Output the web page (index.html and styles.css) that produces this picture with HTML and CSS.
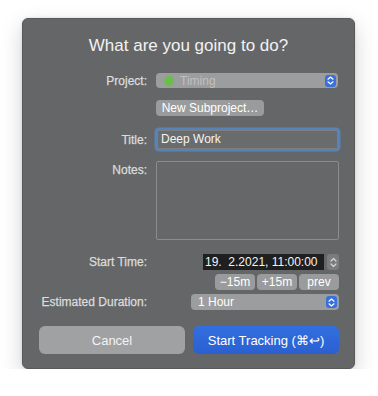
FILE: index.html
```html
<!DOCTYPE html>
<html lang="en">
<head>
    <meta charset="UTF-8">
    <meta name="viewport" content="width=device-width, initial-scale=1.0">
    <title>Start Tracking</title>
    <link rel="stylesheet" href="styles.css">
</head>
<body>

    <div class="dialog">
        <h1 class="heading">What are you going to do?</h1>

        <!-- Project -->
        <div class="row row-project">
            <div class="label">Project:</div>
            <div class="popup popup-project">
                <span class="dot"></span>
                <span class="popup-text muted">Timing</span>
                <span class="stepper-blue">
                    <svg width="7" height="9" viewBox="0 0 7 9"><path d="M1 3.2 L3.5 1 L6 3.2 M1 5.8 L3.5 8 L6 5.8" fill="none" stroke="#fff" stroke-width="1.2" stroke-linecap="round" stroke-linejoin="round"/></svg>
                </span>
            </div>
        </div>

        <div class="row row-sub">
            <div></div>
            <div class="control">
                <button class="btn-small btn-sub">New Subproject…</button>
            </div>
        </div>

        <!-- Title -->
        <div class="row row-title">
            <div class="label">Title:</div>
            <div class="text-field">Deep Work</div>
        </div>

        <!-- Notes -->
        <div class="row row-notes">
            <div class="label label-notes">Notes:</div>
            <div class="notes"></div>
        </div>

        <!-- Start time -->
        <div class="row row-start">
            <div class="label">Start Time:</div>
            <div class="date-row">
                <div class="date-field">19.&nbsp; 2.2021, 11:00:00</div>
                <div class="stepper-grey">
                    <svg width="7" height="11" viewBox="0 0 7 11"><path d="M1 4 L3.5 1.5 L6 4 M1 7 L3.5 9.5 L6 7" fill="none" stroke="#d6d6d6" stroke-width="1.2" stroke-linecap="round" stroke-linejoin="round"/></svg>
                </div>
            </div>
        </div>

        <div class="row row-offsets">
            <div></div>
            <div class="offsets">
                <button class="btn-small btn-offset">−15m</button>
                <button class="btn-small btn-offset">+15m</button>
                <button class="btn-small btn-offset">prev</button>
            </div>
        </div>

        <!-- Duration -->
        <div class="row row-duration">
            <div class="label">Estimated Duration:</div>
            <div class="popup popup-duration">
                <span class="popup-text">1 Hour</span>
                <span class="stepper-blue">
                    <svg width="7" height="9" viewBox="0 0 7 9"><path d="M1 3.2 L3.5 1 L6 3.2 M1 5.8 L3.5 8 L6 5.8" fill="none" stroke="#fff" stroke-width="1.2" stroke-linecap="round" stroke-linejoin="round"/></svg>
                </span>
            </div>
        </div>

        <div class="actions">
            <button class="btn-large btn-cancel">Cancel</button>
            <button class="btn-large btn-start">Start Tracking (⌘↩)</button>
        </div>
    </div>

</body>
</html>
```

FILE: styles.css
```css
body {
    margin: 0;
    background-color: #ffffff;
    font-family: "Liberation Sans", Arial, sans-serif;
    padding: 18px 0 0 22px;
}
.dialog {
    width: 331px;
    height: 349px;
    background-color: #656667;
    border: 1px solid #58595a;
    border-radius: 6px;
    box-shadow: 0 8px 22px rgba(0, 0, 0, 0.18), 0 0 3px rgba(0, 0, 0, 0.12);
    display: flex;
    flex-direction: column;
}
.heading {
    margin: 17px 0 0;
    font-size: 17px;
    line-height: 20px;
    font-weight: normal;
    color: #f2f2f2;
    text-align: center;
}

/* label + control rows */
.row {
    display: grid;
    grid-template-columns: 124px 183px;
    column-gap: 9px;
    align-items: center;
}
.row-project { margin-top: 17px; }
.row-sub { margin-top: 10px; }
.row-title { margin-top: 14px; }
.row-notes { margin-top: 12px; align-items: start; }
.row-start { margin-top: 14px; }
.row-offsets { margin-top: 4px; }
.row-duration { margin-top: 4px; }

.label {
    justify-self: end;
    font-size: 12px;
    line-height: 14px;
    color: #dcdcdc;
    -webkit-text-stroke: 0.25px #dcdcdc;
}
.label-notes {
    margin-top: 2px;
}

/* popups */
.popup {
    height: 15px;
    box-sizing: border-box;
    border-radius: 4px;
    background-color: #9c9d9e;
    display: flex;
    align-items: center;
    font-size: 12px;
    color: #ffffff;
    padding: 0 2px 0 8px;
}
.popup-project {
    width: 182px;
}
.popup-duration {
    justify-self: end;
    width: 148px;
    height: 16px;
    padding-left: 7px;
}
.popup-text {
    flex: 1;
}
.muted {
    color: #bfc0c1;
}
.dot {
    flex: none;
    width: 10px;
    height: 10px;
    border-radius: 50%;
    background-color: #6bbd4c;
    margin-right: 6px;
}
.stepper-blue {
    flex: none;
    width: 11px;
    height: 12px;
    border-radius: 3px;
    background-color: #3a70de;
    display: flex;
    align-items: center;
    justify-content: center;
}

/* small grey buttons */
.btn-small {
    font-family: inherit;
    font-size: 12px;
    color: #ffffff;
    background-color: #9a9b9c;
    border: none;
    border-radius: 4px;
    height: 16px;
    padding: 0;
    line-height: 16px;
}
.btn-sub {
    width: 108px;
}

/* title */
.text-field {
    height: 19px;
    margin: 0 1px;
    box-sizing: border-box;
    background-color: #6a6b6c;
    border: 1px solid #7d7e7f;
    box-shadow: 0 0 0 2.5px #5783b8;
    border-radius: 2px;
    font-size: 12px;
    line-height: 17px;
    color: #f4f4f4;
    padding-left: 3px;
}

/* notes */
.notes {
    height: 79px;
    box-sizing: border-box;
    border: 1px solid #8b8c8d;
    border-radius: 2px;
    background-color: #666768;
}

/* start time */
.date-row {
    display: flex;
    justify-content: flex-end;
    gap: 3px;
}
.date-field {
    width: 121px;
    height: 16px;
    background-color: #1f1f1f;
    color: #f4f4f4;
    font-size: 12px;
    line-height: 16px;
    padding-left: 2px;
    box-sizing: border-box;
    white-space: nowrap;
}
.stepper-grey {
    width: 12px;
    height: 16px;
    border-radius: 3px;
    background-color: #7b7c7d;
    display: flex;
    align-items: center;
    justify-content: center;
}
.offsets {
    display: flex;
    justify-content: flex-end;
    gap: 2px;
}
.btn-offset {
    width: 40px;
}

/* bottom buttons */
.actions {
    display: flex;
    gap: 8px;
    margin: 16px 0 0 16px;
}
.btn-large {
    width: 146px;
    height: 28px;
    border: none;
    border-radius: 6px;
    font-family: inherit;
    font-size: 13px;
    color: #ffffff;
}
.btn-cancel {
    background-color: #a0a1a2;
    color: #f4f4f4;
}
.btn-start {
    background: linear-gradient(#336fe0, #2a5fd2);
}
```
